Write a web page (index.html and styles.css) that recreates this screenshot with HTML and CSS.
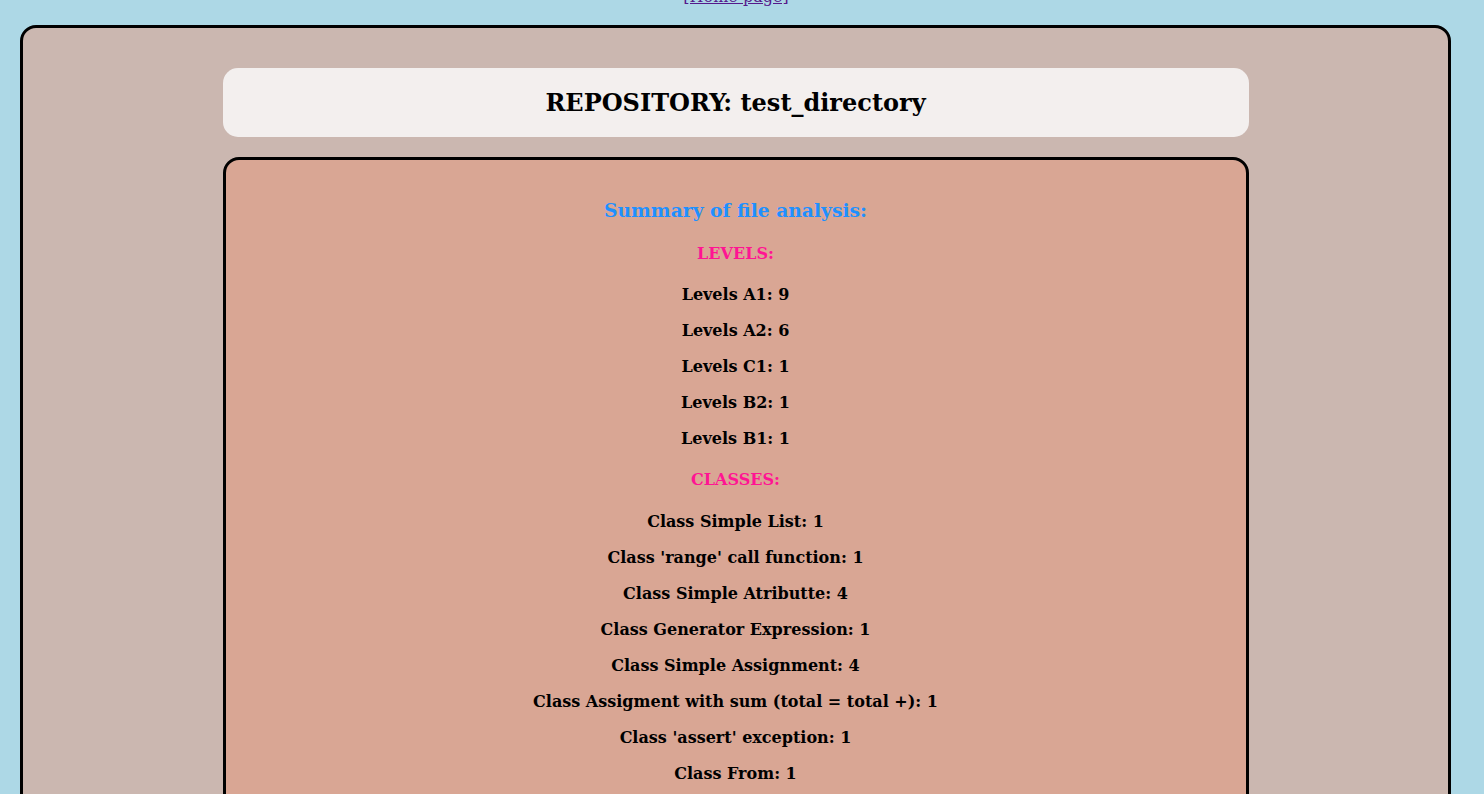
FILE: index.html
```html
<!DOCTYPE html>
<html>
<head>
<meta charset="utf-8">
<title>Repository</title>
<link rel="stylesheet" href="styles.css">
</head>
<body>
<div class="top-link"><a href="#">[Home page]</a></div>
<div class="outer">
  <div class="header"><h1>REPOSITORY: test_directory</h1></div>
  <div class="content">
    <h2 class="summary">Summary of file analysis:</h2>
    <h3 class="section">LEVELS:</h3>
    <div class="list">
      <p>Levels A1: 9</p>
      <p>Levels A2: 6</p>
      <p>Levels C1: 1</p>
      <p>Levels B2: 1</p>
      <p>Levels B1: 1</p>
    </div>
    <h3 class="section">CLASSES:</h3>
    <div class="list classes">
      <p>Class Simple List: 1</p>
      <p>Class 'range' call function: 1</p>
      <p>Class Simple Atributte: 4</p>
      <p>Class Generator Expression: 1</p>
      <p>Class Simple Assignment: 4</p>
      <p>Class Assigment with sum (total = total +): 1</p>
      <p>Class 'assert' exception: 1</p>
      <p>Class From: 1</p>
    </div>
  </div>
</div>
</body>
</html>
```
FILE: styles.css
```css
html, body {
  margin: 0;
  padding: 0;
}
body {
  background: #add8e6;
  font-family: "DejaVu Serif", serif;
  color: #000;
}
.top-link {
  margin-top: -13px;
  height: 20px;
  line-height: 20px;
  font-size: 16px;
  text-align: center;
  padding-right: 12px;
}
.top-link a {
  color: #551a8b;
}
.outer {
  margin: 18px 33px 0 20px;
  background: #cbb7b0;
  border: 3px solid #000;
  border-radius: 16px;
  padding: 40px 0 80px;
}
.header {
  width: 72%;
  margin: 0 auto;
  height: 69px;
  background: #f3efee;
  border-radius: 15px;
  display: flex;
  align-items: center;
  justify-content: center;
}
.header h1 {
  margin: 0;
  font-size: 24px;
  font-weight: bold;
  line-height: 28px;
  padding-top: 1px;
}
.content {
  width: 72%;
  box-sizing: border-box;
  margin: 20px auto 0;
  background: #d9a694;
  border: 3px solid #000;
  border-radius: 16px;
  padding: 39px 0 60px;
  text-align: center;
}
.summary {
  margin: 0;
  font-size: 18.72px;
  line-height: 22px;
  color: #1e90ff;
  font-weight: bold;
}
.section {
  margin: 23px 0 0;
  font-size: 16px;
  line-height: 20px;
  color: #ff1493;
  font-weight: bold;
}
.list {
  margin-top: 21px;
  display: flex;
  flex-direction: column;
  gap: 16px;
}
.list.classes {
  margin-top: 22px;
}
.list p {
  margin: 0;
  font-size: 16px;
  line-height: 20px;
  font-weight: bold;
}
.list + .section {
  margin-top: 21px;
}
```
